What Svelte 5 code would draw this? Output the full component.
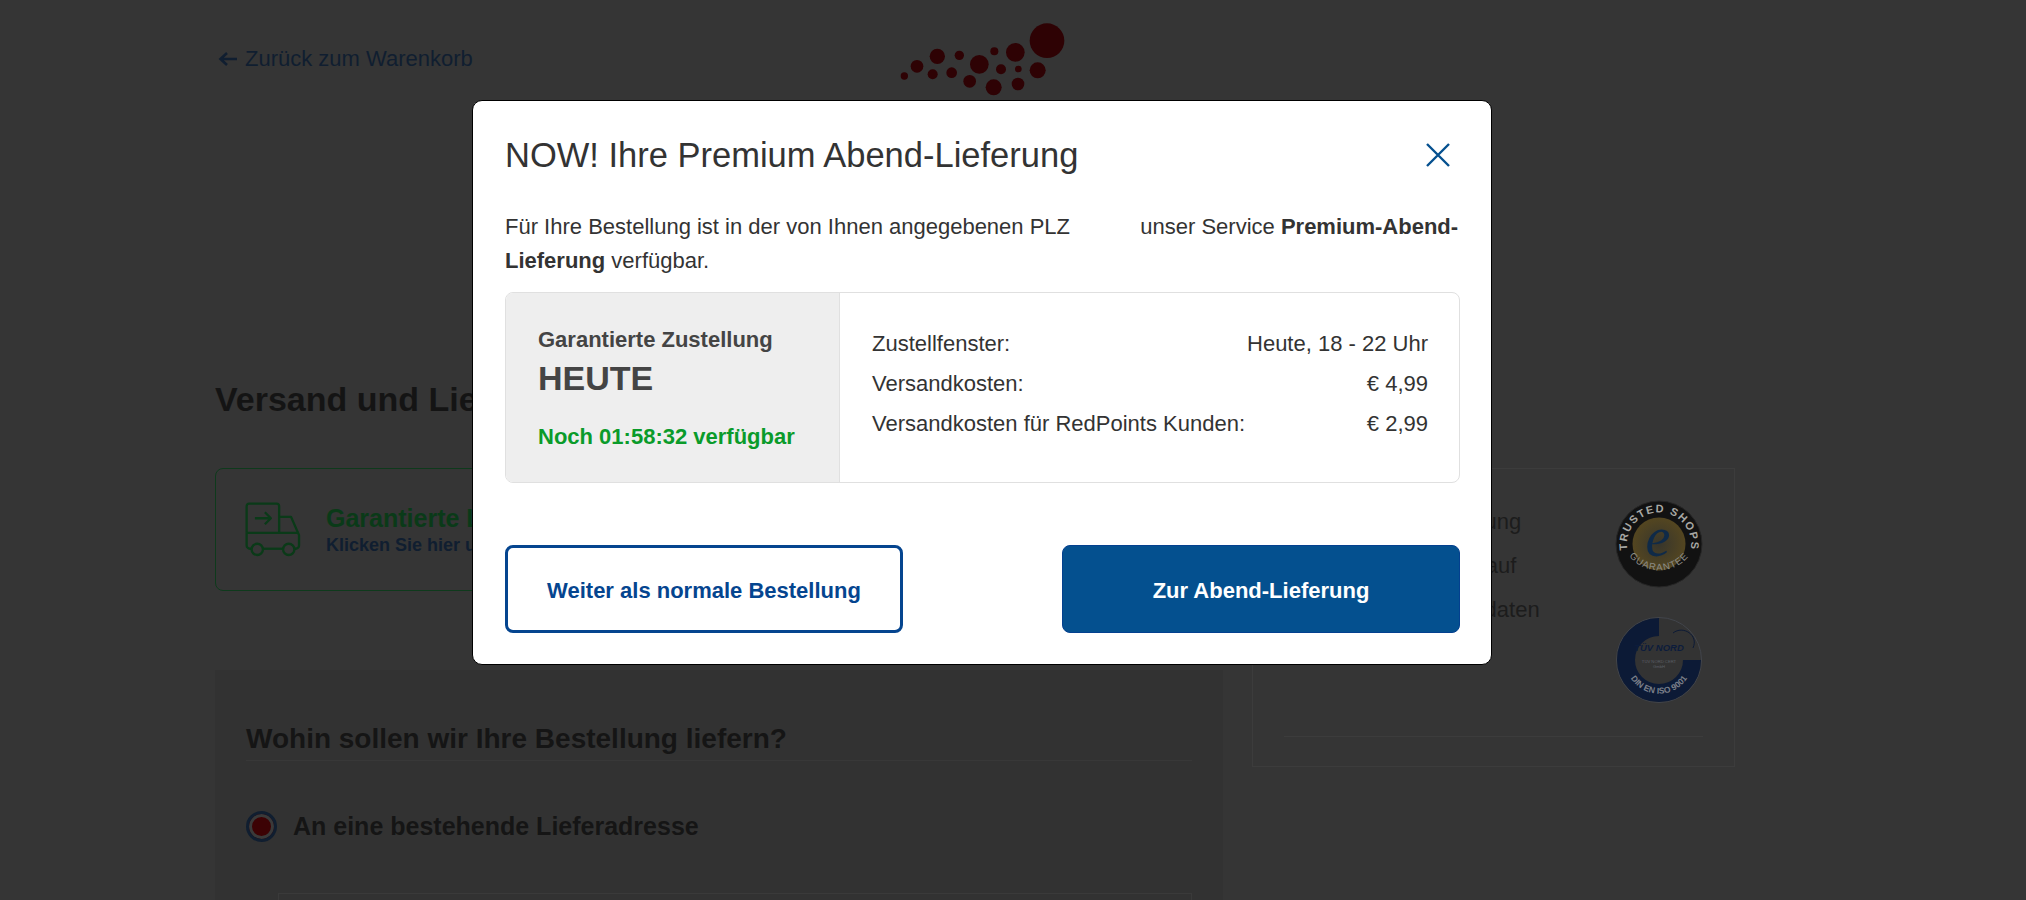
<script>
  const dots = [
    [498, 92, 52], [403, 127, 28], [340, 124, 12], [295, 163, 28],
    [235, 136, 14], [169, 139, 23], [108, 169, 19], [70, 198, 11],
    [155, 193, 15], [212, 188, 16], [266, 214, 19], [338, 232, 24],
    [360, 178, 15], [412, 177, 10], [411, 222, 19], [470, 181, 24]
  ];

  const costs = [
    { label: 'Zustellfenster:', value: 'Heute, 18 - 22 Uhr' },
    { label: 'Versandkosten:', value: '€ 4,99' },
    { label: 'Versandkosten für RedPoints Kunden:', value: '€ 2,99' }
  ];

  const benefits = ['Versicherte Auslieferung', 'Sicherer Online-Einkauf', 'Schutz Ihrer Kundendaten'];
</script>

<div class="page">
  <header class="header">
    <a class="back" href="#warenkorb">
      <svg width="20" height="16" viewBox="0 0 20 16" aria-hidden="true">
        <path d="M19 8H3M9 2L2.5 8L9 14" fill="none" stroke="#101e30" stroke-width="2.6" />
      </svg>
      Zurück zum Warenkorb
    </a>
    <svg class="logo" width="200" height="95" viewBox="0 0 600 285" aria-label="Logo">
      {#each dots as [cx, cy, r]}
        <circle {cx} {cy} {r} fill="#2e0204" />
      {/each}
    </svg>
  </header>

  <h1 class="page-title">Versand und Lieferung</h1>

  <div class="columns">
    <div class="left">
      <div class="promo">
        <svg width="58" height="57" viewBox="130 380 175 170" aria-hidden="true">
          <g fill="none" stroke="#0a3a18" stroke-width="7" stroke-linejoin="round">
            <path d="M138 475V395a8 8 0 0 1 8-8H228a8 8 0 0 1 8 8V475" />
            <path d="M236 427H272L296 482V513a10 10 0 0 1-10 10H282" />
            <path d="M138 475H296" />
            <path d="M138 475V513a10 10 0 0 0 10 10H153" />
            <path d="M187 523H248" />
            <circle cx="170" cy="525" r="17" />
            <circle cx="265" cy="525" r="17" />
            <path d="M163 431H210M193 413L211 431L193 449" />
          </g>
        </svg>
        <div>
          <div class="promo-title">Garantierte Lieferung noch heute</div>
          <div class="promo-sub">Klicken Sie hier und erhalten Sie Ihre Bestellung</div>
        </div>
      </div>

      <section class="address">
        <h2>Wohin sollen wir Ihre Bestellung liefern?</h2>
        <div class="radio-row">
          <span class="radio"></span>
          <span>An eine bestehende Lieferadresse</span>
        </div>
        <div class="address-box"></div>
      </section>
    </div>

    <aside class="side">
      <div class="side-top">
        <div class="benefits">
          {#each benefits as item}
            <p>{item}</p>
          {/each}
        </div>
        <div class="seals">
          <svg width="88" height="88" viewBox="-44 -44 88 88" aria-label="Trusted Shops Guarantee">
            <defs>
              <path id="ts-top" d="M-31.5 6A32 32 0 1 1 31.5 6" />
              <path id="ts-bottom" d="M-38 -6A38.500 38.500 0 0 0 38 -6" />
              <radialGradient id="ts-gold">
                <stop offset="0" stop-color="#37352c" />
                <stop offset="1" stop-color="#544620" />
              </radialGradient>
            </defs>
            <circle r="43" fill="#121212" stroke="#262626" />
            <circle r="26.500" fill="url(#ts-gold)" />
            <text class="ts-ring" text-anchor="middle">
              <textPath href="#ts-top" startOffset="50%">TRUSTED SHOPS</textPath>
            </text>
            <text class="ts-ring thin" text-anchor="middle">
              <textPath href="#ts-bottom" startOffset="50%">GUARANTEE</textPath>
            </text>
            <text class="ts-e" x="-1" y="12" text-anchor="middle">e</text>
          </svg>
          <svg width="88" height="88" viewBox="-44 -44 88 88" aria-label="TÜV Nord">
            <defs>
              <path id="tuv-bottom" d="M-33 6A33.500 33.500 0 0 0 33 6" />
            </defs>
            <circle r="42.500" fill="#333" stroke="#42454c" />
            <path d="M0 -33A33 33 0 1 0 33 0" fill="none" stroke="#0c1a36" stroke-width="18" />
            <path d="M14 -27C24 -35 40 -25 34 -12" fill="none" stroke="#0c1a36" stroke-width="1" />
            <text class="tuv-name" y="-9" text-anchor="middle">TÜV NORD</text>
            <text class="tuv-small" y="3" text-anchor="middle">TÜV NORD CERT</text>
            <text class="tuv-small" y="8" text-anchor="middle">GmbH</text>
            <text class="tuv-iso" text-anchor="middle">
              <textPath href="#tuv-bottom" startOffset="50%">DIN EN ISO 9001</textPath>
            </text>
          </svg>
        </div>
      </div>
      <div class="side-line"></div>
    </aside>
  </div>
</div>

<div class="overlay">
  <div class="modal" role="dialog" aria-labelledby="modal-title">
    <div class="modal-header">
      <h2 id="modal-title">NOW! Ihre Premium Abend-Lieferung</h2>
      <button class="close" aria-label="Schließen">
        <svg width="24" height="24" viewBox="0 0 24 24">
          <path d="M1 1L23 23M23 1L1 23" stroke="#05508f" stroke-width="2.400" fill="none" />
        </svg>
      </button>
    </div>

    <p class="intro">
      Für Ihre Bestellung ist in der von Ihnen angegebenen PLZ <span class="plz"></span> unser Service <strong>Premium-Abend-Lieferung</strong> verfügbar.
    </p>

    <div class="info">
      <div class="info-left">
        <div class="guarantee">Garantierte Zustellung</div>
        <div class="today">HEUTE</div>
        <div class="countdown">Noch 01:58:32 verfügbar</div>
      </div>
      <div class="info-right">
        {#each costs as row}
          <div class="cost-row">
            <span>{row.label}</span>
            <span>{row.value}</span>
          </div>
        {/each}
      </div>
    </div>

    <div class="actions">
      <button class="btn btn-outline">Weiter als normale Bestellung</button>
      <button class="btn btn-solid">Zur Abend-Lieferung</button>
    </div>
  </div>
</div>

<style>
  :global(body) {
    background: #353535;
    font-family: "Liberation Sans", Arial, sans-serif;
    overflow: hidden;
  }

  .page {
    width: 1520px;
    height: 900px;
    margin-left: 215px;
    overflow: hidden;
  }

  .header {
    display: flex;
    align-items: flex-start;
    height: 105px;
  }

  .back {
    display: flex;
    align-items: center;
    gap: 7px;
    margin: 47px 0 0 3px;
    color: #101e30;
    font-size: 22px;
    line-height: 24px;
    text-decoration: none;
  }

  .logo {
    margin: 10px 0 0 408px;
  }

  .page-title {
    margin: 274px 0 0;
    color: #141414;
    font-size: 34px;
    line-height: 40px;
    font-weight: 700;
  }

  .columns {
    display: grid;
    grid-template-columns: 1008px 483px;
    gap: 29px;
    margin-top: 49px;
  }

  .promo {
    display: flex;
    align-items: center;
    gap: 24px;
    height: 123px;
    box-sizing: border-box;
    padding: 0 28px;
    border: 1px solid #0e3a1c;
    border-radius: 8px;
  }

  .promo-title {
    color: #0a3a18;
    font-size: 25px;
    line-height: 30px;
    font-weight: 700;
  }

  .promo-sub {
    color: #101e30;
    font-size: 18px;
    line-height: 24px;
    font-weight: 700;
  }

  .address {
    margin-top: 79px;
    padding: 51px 31px 0;
    background: #323232;
    height: 300px;
  }

  .address h2 {
    margin: 0;
    padding-bottom: 4px;
    border-bottom: 1px solid #383838;
    color: #151515;
    font-size: 28px;
    line-height: 35px;
    font-weight: 700;
  }

  .radio-row {
    display: flex;
    align-items: center;
    gap: 16px;
    margin-top: 49px;
    color: #151515;
    font-size: 25px;
    line-height: 32px;
    font-weight: 700;
  }

  .radio {
    box-sizing: border-box;
    width: 31px;
    height: 31px;
    border-radius: 50%;
    background: #3c0204;
    border: 3px solid #101e30;
    box-shadow: inset 0 0 0 3px #3a3a3a;
  }

  .address-box {
    margin: 51px 0 0 32px;
    height: 100px;
    border: 1px solid #3a3a3a;
  }

  .side {
    box-sizing: border-box;
    height: 299px;
    padding: 31px 31px 0;
    border: 1px solid #3c3c3c;
  }

  .side-top {
    display: flex;
    justify-content: space-between;
    height: 236px;
    border-bottom: 1px solid #3c3c3c;
  }

  .benefits {
    padding-top: 7px;
  }

  .benefits p {
    margin: 0 0 14px;
    color: #1c1c1c;
    font-size: 22px;
    line-height: 30px;
  }

  .seals {
    display: flex;
    flex-direction: column;
    gap: 28px;
  }

  .ts-ring {
    fill: #a8a8a4;
    font-size: 11px;
    font-weight: 700;
    letter-spacing: 1.400px;
  }

  .ts-ring.thin {
    font-size: 9.500px;
    font-weight: 400;
    letter-spacing: 1px;
    fill: #8e8e8a;
  }

  .ts-e {
    fill: #0f2a48;
    font-family: "Liberation Serif", serif;
    font-style: italic;
    font-size: 56px;
  }

  .tuv-name {
    fill: #0c1c3c;
    font-size: 9.500px;
    font-weight: 700;
    font-style: italic;
  }

  .tuv-small {
    fill: #5c5f66;
    font-size: 4.200px;
  }

  .tuv-iso {
    fill: #7c808a;
    font-size: 8.500px;
    font-weight: 700;
  }

  .overlay {
    position: fixed;
    inset: 0;
    padding: 100px 0 0 472px;
  }

  .modal {
    box-sizing: border-box;
    width: 1020px;
    height: 565px;
    padding: 30px 31px 0 32px;
    background: #fff;
    border: 1px solid #000;
    border-radius: 10px;
    color: #333;
  }

  .modal-header {
    display: flex;
    justify-content: space-between;
    align-items: center;
    height: 48px;
  }

  .modal-header h2 {
    margin: 0;
    font-size: 34.500px;
    line-height: 48px;
    font-weight: 400;
  }

  .close {
    display: flex;
    margin-right: 10px;
    padding: 0;
    background: none;
    border: none;
  }

  .intro {
    margin: 31px -4px 0 0;
    font-size: 22px;
    line-height: 34px;
  }

  .plz {
    display: inline-block;
    width: 58px;
  }

  .intro strong {
    font-weight: 700;
  }

  .info {
    display: flex;
    height: 191px;
    margin-top: 14px;
    box-sizing: border-box;
    border: 1px solid #e0e0e0;
    border-radius: 8px;
    overflow: hidden;
  }

  .info-left {
    box-sizing: border-box;
    width: 334px;
    padding: 32px 32px 0;
    background: #eee;
    border-right: 1px solid #e0e0e0;
    color: #444;
  }

  .guarantee {
    font-size: 22px;
    line-height: 30px;
    font-weight: 700;
  }

  .today {
    margin-top: 3px;
    font-size: 34px;
    line-height: 40px;
    font-weight: 700;
  }

  .countdown {
    margin-top: 24px;
    color: #0a9b2a;
    font-size: 22px;
    line-height: 30px;
    font-weight: 700;
  }

  .info-right {
    flex: 1;
    padding: 31px 31px 0 32px;
  }

  .cost-row {
    display: flex;
    justify-content: space-between;
    font-size: 22px;
    line-height: 40px;
  }

  .actions {
    display: flex;
    justify-content: space-between;
    margin-top: 62px;
  }

  .btn {
    width: 398px;
    height: 88px;
    box-sizing: border-box;
    padding-top: 4px;
    border-radius: 8px;
    font-family: inherit;
    font-size: 22px;
    font-weight: 700;
  }

  .btn-outline {
    background: #fff;
    border: 3px solid #05458f;
    color: #05458f;
  }

  .btn-solid {
    background: #04508f;
    border: 1px solid #04408f;
    color: #fff;
  }
</style>
